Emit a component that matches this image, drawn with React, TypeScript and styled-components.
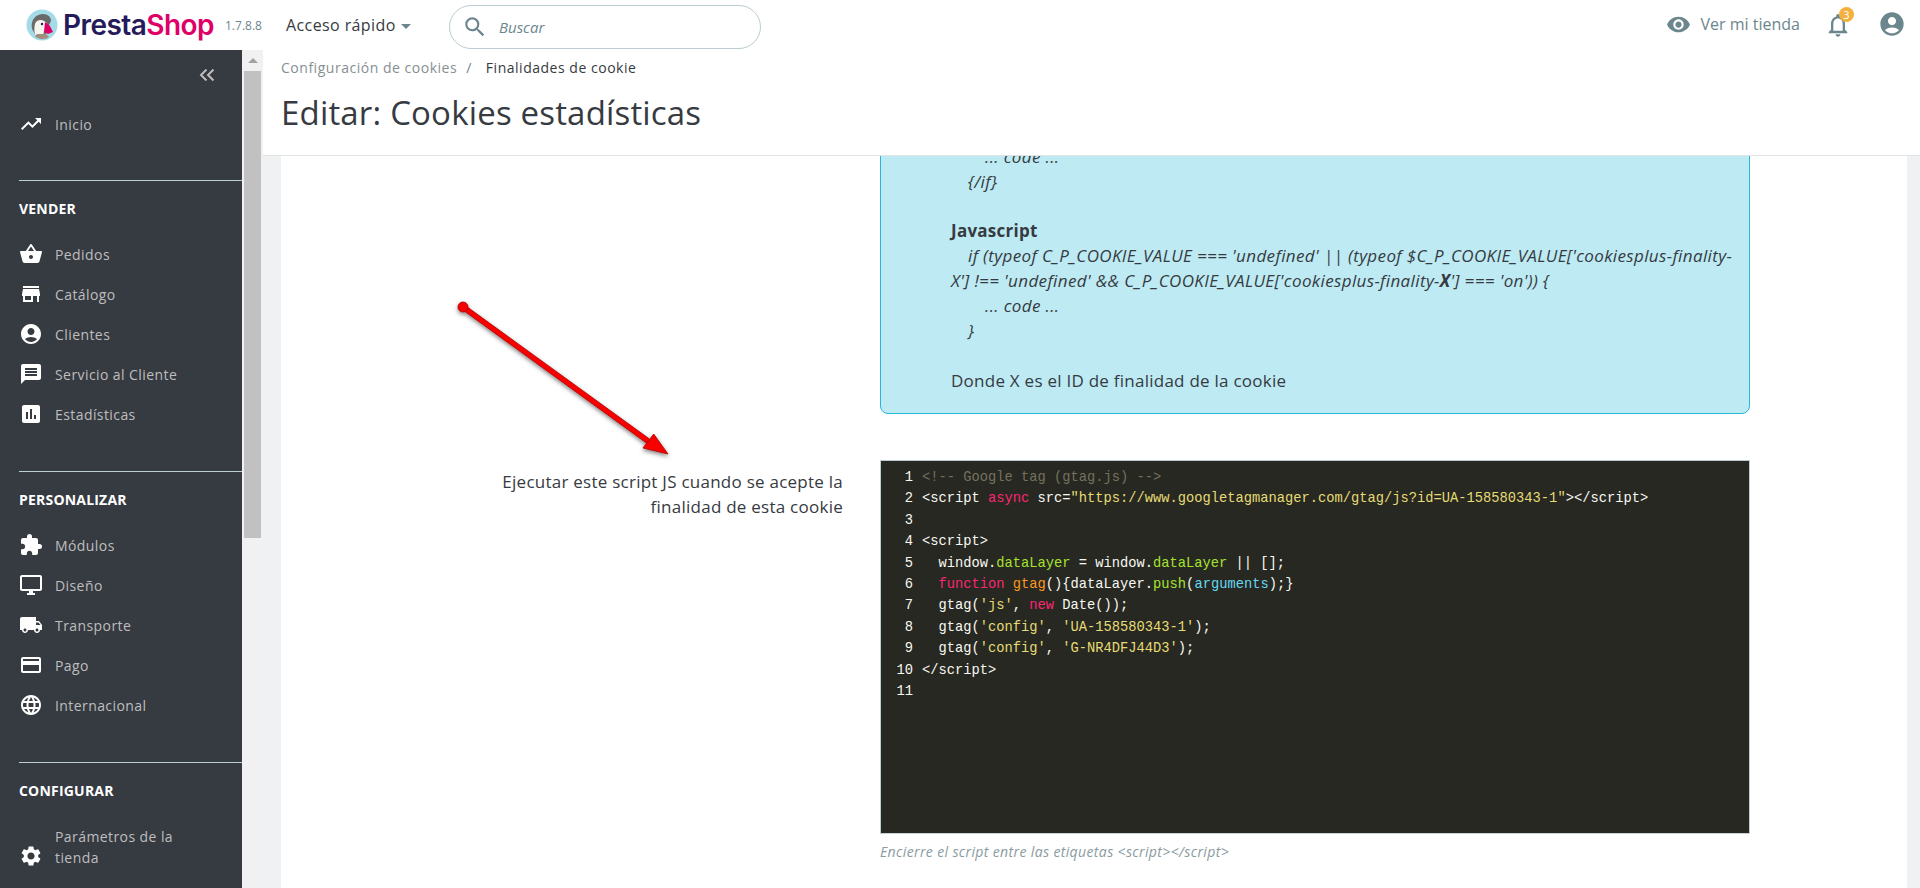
import React from "react";
import styled, { createGlobalStyle } from "styled-components";
import {
  MdAccountCircle,
  MdAssessment,
  MdCreditCard,
  MdExtension,
  MdLanguage,
  MdLocalShipping,
  MdMessage,
  MdNotificationsNone,
  MdOutlineDesktopWindows,
  MdSearch,
  MdSettings,
  MdShoppingBasket,
  MdStore,
  MdTrendingUp,
  MdVisibility,
} from "react-icons/md";

const GlobalStyle = createGlobalStyle`
  html, body {
    margin: 0;
    height: 100%;
    overflow: hidden;
    background: #eff1f2;
    font-family: "Open Sans", "Liberation Sans", sans-serif;
    font-size: 14px;
    color: #363a41;
  }
  * { box-sizing: border-box; }
`;

const Page = styled.div`
  width: 1920px;
  height: 888px;
  display: flex;
  flex-direction: column;
  overflow: hidden;
`;

const TopBar = styled.header`
  height: 50px;
  flex: none;
  background: #fff;
  display: flex;
  align-items: center;
  padding: 0 14px 0 26px;
`;

const LogoLink = styled.a`
  display: flex;
  align-items: center;
  width: 199px;
`;

const LogoMark = styled.svg`
  width: 32px;
  height: 32px;
  flex: none;
  margin-right: 5px;
`;

const LogoText = styled.span`
  font-family: Inter, "Liberation Sans", sans-serif;
  font-size: 28px;
  font-weight: 600;
  letter-spacing: -0.55px;
  color: #251b5b;
  line-height: 1;
  margin-top: -1px;
`;

const LogoPink = styled.span`
  color: #df0067;
`;

const Version = styled.span`
  font-size: 12px;
  color: #6c868e;
  width: 61px;
`;

const QuickAccess = styled.span`
  font-size: 16px;
  letter-spacing: 0.4px;
  color: #363a41;
  display: flex;
  align-items: center;
  gap: 5px;
  width: 163px;
`;

const Caret = styled.i`
  width: 0;
  height: 0;
  margin-top: 2px;
  border-left: 5px solid transparent;
  border-right: 5px solid transparent;
  border-top: 5px solid #6c868e;
`;

const SearchBox = styled.div`
  width: 312px;
  height: 44px;
  margin-top: 4px;
  border: 1px solid #bbcdd2;
  border-radius: 22px;
  display: flex;
  align-items: center;
  padding-left: 12px;
  color: #6c868e;
  gap: 11px;
`;

const SearchLabel = styled.span`
  font-style: italic;
  font-size: 15px;
  color: #6c868e;
`;

const TopRight = styled.div`
  margin-left: auto;
  display: flex;
  align-items: center;
  color: #6c868e;
  padding-bottom: 2px;
`;

const ShopLink = styled.span`
  display: flex;
  align-items: center;
  gap: 10px;
  font-size: 16px;
  color: #6c868e;
  margin-right: 24px;
`;

const Bell = styled.span`
  position: relative;
  display: flex;
  margin-top: 2px;
  margin-right: 26px;
`;

const Badge = styled.span`
  position: absolute;
  top: -4px;
  left: 15px;
  width: 15px;
  height: 15px;
  border-radius: 50%;
  background: #f4b03e;
  color: #fff;
  font-size: 11px;
  line-height: 15px;
  text-align: center;
`;

const Body = styled.div`
  flex: 1;
  display: flex;
  min-height: 0;
`;

const Sidebar = styled.nav`
  width: 242px;
  flex: none;
  background: #363a41;
  overflow: hidden;
`;

const Collapse = styled.div`
  height: 54px;
  display: flex;
  justify-content: flex-end;
  padding: 19px 27px 0 0;
  color: #bebebe;
`;

const Section = styled.div`
  margin-left: 19px;
  margin-top: 36px;
  border-top: 1px solid #bbcdd2;
  padding-bottom: 1px;
`;

const SectionTitle = styled.div`
  height: 53px;
  padding-top: 2px;
  display: flex;
  align-items: center;
  font-weight: 700;
  font-size: 14px;
  letter-spacing: 0.2px;
  color: #fff;
`;

const NavItem = styled.a<{ $wrap?: boolean }>`
  display: flex;
  align-items: ${(p) => (p.$wrap ? "flex-end" : "center")};
  gap: 12px;
  min-height: 40px;
  padding-right: 40px;
  font-size: 14px;
  letter-spacing: 0.42px;
  line-height: 21px;
  color: #bebebe;
  ${(p) => p.$wrap && "padding-top: 10px; padding-bottom: 8px;"}
  svg {
    flex: none;
    color: #fff;
  }
`;

const HomeItem = styled(NavItem)`
  margin-left: 19px;
`;

const Scrollbar = styled.div`
  width: 21px;
  flex: none;
  background: #f1f1f1;
  padding-left: 2px;
`;

const ScrollArrow = styled.div`
  height: 21px;
  width: 17px;
  display: flex;
  align-items: center;
  justify-content: center;
  &::before {
    content: "";
    border-left: 5px solid transparent;
    border-right: 5px solid transparent;
    border-bottom: 5px solid #a3a3a3;
  }
`;

const ScrollThumb = styled.div`
  width: 17px;
  height: 467px;
  background: #c1c1c1;
`;

const Main = styled.main`
  flex: 1;
  min-width: 0;
  display: flex;
  flex-direction: column;
`;

const PageHead = styled.div`
  height: 106px;
  flex: none;
  background: #fff;
  border-bottom: 1px solid #dfe3e4;
  padding: 8px 0 0 18px;
`;

const Breadcrumb = styled.div`
  display: flex;
  align-items: center;
  font-size: 14px;
  letter-spacing: 0.52px;
  line-height: 20px;
  color: #363a41;
`;

const CrumbLink = styled.span`
  color: #858f93;
`;

const CrumbSep = styled.span`
  color: #6c868e;
  margin: 0 14px 0 9px;
`;

const Title = styled.h1`
  margin: 14px 0 0;
  font-size: 33px;
  letter-spacing: 0.18px;
  line-height: 42px;
  font-weight: 400;
  color: #363a41;
`;

const Scroller = styled.div`
  flex: 1;
  min-height: 0;
  overflow: hidden;
  padding: 0 13px 0 18px;
`;

const Card = styled.section`
  position: relative;
  background: #fff;
  height: 100%;
`;

const FormRow = styled.div`
  display: grid;
  grid-template-columns: 562px 870px;
  column-gap: 37px;
`;

const Label = styled.div`
  font-size: 17px;
  letter-spacing: 0.25px;
  line-height: 25px;
  text-align: right;
  padding-top: 9px;
`;

const InfoBox = styled.div`
  margin-top: -33px;
  margin-bottom: 46px;
  padding: 20px 20px 20px 70px;
  background: #bdeaf3;
  border: 1px solid #25b9d7;
  border-radius: 8px;
  font-size: 17px;
  letter-spacing: 0.25px;
  line-height: 25px;
  color: #363a41;
`;

const InfoLine = styled.div<{ $indent?: number }>`
  font-style: italic;
  letter-spacing: 0.37px;
  text-indent: ${(p) => (p.$indent || 0) * 17}px;
  min-height: 25px;
  white-space: nowrap;
`;

const InfoHead = styled.div`
  font-weight: 700;
  margin-top: 24px;
`;

const InfoNote = styled.div`
  margin-top: 25px;
`;

const Editor = styled.div`
  height: 374px;
  background: #272822;
  border: 1px solid #bbcdd2;
  border-bottom-color: #c7d2d5;
  padding-top: 6px;
  font-family: "Liberation Mono", "DejaVu Sans Mono", monospace;
  font-size: 13.75px;
  line-height: 21.4px;
  color: #f8f8f2;
`;

const CodeRow = styled.div`
  display: flex;
  height: 21.4px;
  white-space: pre;
`;

const Gutter = styled.span`
  width: 32px;
  margin-right: 9px;
  text-align: right;
  flex: none;
`;

const Tok = styled.span<{ $c: string }>`
  color: ${(p) => p.$c};
`;

const Help = styled.div`
  margin-top: 8px;
  font-size: 14px;
  letter-spacing: 0.37px;
  font-style: italic;
  color: #8a9ba1;
`;

const ArrowMark = styled.svg`
  position: absolute;
  left: 161px;
  top: 130px;
  width: 240px;
  height: 190px;
  overflow: visible;
`;

const PINK = "#f92672";
const YEL = "#e6db74";
const GRN = "#a6e22e";
const CMT = "#75715e";

const code: [string, string?][][] = [
  [["<!-- Google tag (gtag.js) -->", CMT]],
  [
    ["<script "],
    ["async", PINK],
    [" src="],
    ['"https://www.googletagmanager.com/gtag/js?id=UA-158580343-1"', YEL],
    ["></script>"],
  ],
  [],
  [["<script>"]],
  [
    ["  window."],
    ["dataLayer", GRN],
    [" = window."],
    ["dataLayer", GRN],
    [" || [];"],
  ],
  [
    ["  "],
    ["function", PINK],
    [" "],
    ["gtag", "#fd971f"],
    ["(){dataLayer."],
    ["push", GRN],
    ["("],
    ["arguments", "#66d9ef"],
    [");}"],
  ],
  [["  gtag("], ["'js'", YEL], [", "], ["new", PINK], [" Date());"]],
  [["  gtag("], ["'config'", YEL], [", "], ["'UA-158580343-1'", YEL], [");"]],
  [["  gtag("], ["'config'", YEL], [", "], ["'G-NR4DFJ44D3'", YEL], [");"]],
  [["</script>"]],
  [],
];

const navGroups = [
  {
    title: "VENDER",
    items: [
      { label: "Pedidos", Icon: MdShoppingBasket },
      { label: "Catálogo", Icon: MdStore },
      { label: "Clientes", Icon: MdAccountCircle },
      { label: "Servicio al Cliente", Icon: MdMessage },
      { label: "Estadísticas", Icon: MdAssessment },
    ],
  },
  {
    title: "PERSONALIZAR",
    items: [
      { label: "Módulos", Icon: MdExtension },
      { label: "Diseño", Icon: MdOutlineDesktopWindows },
      { label: "Transporte", Icon: MdLocalShipping },
      { label: "Pago", Icon: MdCreditCard },
      { label: "Internacional", Icon: MdLanguage },
    ],
  },
  {
    title: "CONFIGURAR",
    items: [{ label: "Parámetros de la tienda", Icon: MdSettings, wrap: true }],
  },
];

function Logo() {
  return (
    <LogoMark viewBox="0 0 32 32">
      <circle cx="16" cy="16" r="15.5" fill="#a4dbe8" />
      <path d="M6 20C4 10 11 5 17 5c5 0 8 3 8 7l-3 6-3 10-9-1z" fill="#6a6a6a" />
      <path d="M9 15c1-4 6-5 9-3 2 1 3 2 3 4l-3 6-1 6H10c-2-4-2-9-1-13z" fill="#f5f5f0" />
      <path d="M9 27c3 4 11 4 14 1l-3-3H11z" fill="#a08f7c" />
      <path d="M19 13l5 4 3 6-5 2-4-2z" fill="#df0067" />
      <circle cx="16" cy="15" r="1.2" fill="#251b5b" />
    </LogoMark>
  );
}

export default function App() {
  return (
    <Page>
      <GlobalStyle />
      <TopBar>
        <LogoLink>
          <Logo />
          <LogoText>
            Presta<LogoPink>Shop</LogoPink>
          </LogoText>
        </LogoLink>
        <Version>1.7.8.8</Version>
        <QuickAccess>
          Acceso rápido <Caret />
        </QuickAccess>
        <SearchBox>
          <MdSearch size={26} />
          <SearchLabel>Buscar</SearchLabel>
        </SearchBox>
        <TopRight>
          <ShopLink>
            <MdVisibility size={25} />
            Ver mi tienda
          </ShopLink>
          <Bell>
            <MdNotificationsNone size={28} />
            <Badge>3</Badge>
          </Bell>
          <MdAccountCircle size={28} />
        </TopRight>
      </TopBar>
      <Body>
        <Sidebar>
          <Collapse>
            <svg width="16" height="12" viewBox="0 0 16 12" fill="none" stroke="currentColor" strokeWidth="2">
              <path d="M7.5 0.5 2 6l5.5 5.5M14.5 0.5 9 6l5.5 5.5" />
            </svg>
          </Collapse>
          <HomeItem>
            <MdTrendingUp size={24} />
            Inicio
          </HomeItem>
          {navGroups.map((g) => (
            <Section key={g.title}>
              <SectionTitle>{g.title}</SectionTitle>
              {g.items.map(({ label, Icon, wrap }: any) => (
                <NavItem key={label} $wrap={wrap}>
                  <Icon size={24} />
                  <span>{label}</span>
                </NavItem>
              ))}
            </Section>
          ))}
        </Sidebar>
        <Scrollbar>
          <ScrollArrow />
          <ScrollThumb />
        </Scrollbar>
        <Main>
          <PageHead>
            <Breadcrumb>
              <CrumbLink>Configuración de cookies</CrumbLink>
              <CrumbSep>/</CrumbSep>
              <span>Finalidades de cookie</span>
            </Breadcrumb>
            <Title>Editar: Cookies estadísticas</Title>
          </PageHead>
          <Scroller>
            <Card>
              <FormRow>
                <div />
                <InfoBox>
                  <InfoLine $indent={2}>... code ...</InfoLine>
                  <InfoLine $indent={1}>{"{/if}"}</InfoLine>
                  <InfoHead>Javascript</InfoHead>
                  <InfoLine $indent={1}>
                    if (typeof C_P_COOKIE_VALUE === 'undefined' || (typeof $C_P_COOKIE_VALUE['cookiesplus-finality-
                  </InfoLine>
                  <InfoLine>
                    X'] !== 'undefined' &amp;&amp; C_P_COOKIE_VALUE['cookiesplus-finality-<b>X</b>'] === 'on')) {"{"}
                  </InfoLine>
                  <InfoLine $indent={2}>... code ...</InfoLine>
                  <InfoLine $indent={1}>{"}"}</InfoLine>
                  <InfoNote>Donde X es el ID de finalidad de la cookie</InfoNote>
                </InfoBox>
              </FormRow>
              <FormRow>
                <Label>
                  Ejecutar este script JS cuando se acepte la
                  <br />
                  finalidad de esta cookie
                </Label>
                <div>
                  <Editor>
                    {code.map((row, i) => (
                      <CodeRow key={i}>
                        <Gutter>{i + 1}</Gutter>
                        <span>
                          {row.map(([t, c], j) =>
                            c ? (
                              <Tok key={j} $c={c}>
                                {t}
                              </Tok>
                            ) : (
                              t
                            )
                          )}
                        </span>
                      </CodeRow>
                    ))}
                  </Editor>
                  <Help>Encierre el script entre las etiquetas &lt;script&gt;&lt;/script&gt;</Help>
                </div>
              </FormRow>
              <ArrowMark viewBox="0 0 240 190">
                <defs>
                  <filter id="arrowShadow" x="-10%" y="-10%" width="120%" height="120%">
                    <feDropShadow dx="0" dy="2" stdDeviation="2" floodColor="#000" floodOpacity="0.5" />
                  </filter>
                </defs>
                <g filter="url(#arrowShadow)" stroke="#a80000" strokeWidth="0.8" fill="#f80000">
                  <path d="M22.5 19 207.5 153 204.5 157 19.5 23z" />
                  <circle cx="21" cy="21" r="5" />
                  <path d="M226 168 211.7 148 201 162z" />
                </g>
              </ArrowMark>
            </Card>
          </Scroller>
        </Main>
      </Body>
    </Page>
  );
}
